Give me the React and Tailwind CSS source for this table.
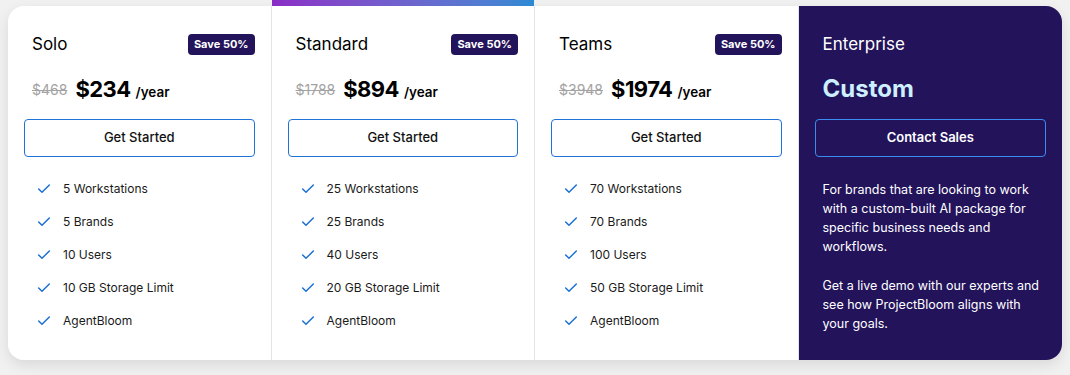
import React from 'react';
import { Check } from 'lucide-react';

const plans = [
  {
    name: 'Solo',
    oldPrice: '$468',
    price: '$234',
    features: ['5 Workstations', '5 Brands', '10 Users', '10 GB Storage Limit', 'AgentBloom'],
  },
  {
    name: 'Standard',
    oldPrice: '$1788',
    price: '$894',
    featured: true,
    features: ['25 Workstations', '25 Brands', '40 Users', '20 GB Storage Limit', 'AgentBloom'],
  },
  {
    name: 'Teams',
    oldPrice: '$3948',
    price: '$1974',
    features: ['70 Workstations', '70 Brands', '100 Users', '50 GB Storage Limit', 'AgentBloom'],
  },
];

const PlanColumn = ({ plan, first }) => (
  <div className={`relative bg-white px-4 pt-[28px] pb-[23px] border-r border-[#e4e4e4] ${first ? 'rounded-l-2xl' : ''}`}>
    {plan.featured && (
      <div className="absolute -top-[6px] left-0 right-0 h-[6px] bg-gradient-to-r from-[#8a2bc6] to-[#2a8ad4]" />
    )}
    <div className="flex items-center justify-between h-[21px]">
      <h3 className="ml-[8px] text-[17px] text-black leading-none">{plan.name}</h3>
      <span className="bg-[#22135a] text-white text-[11px] font-bold rounded-[4px] h-[21px] px-[6px] flex items-center">Save 50%</span>
    </div>
    <div className="ml-[8px] mt-[19px] h-[30px] flex items-center">
      <span className="text-[14px] text-[#a3a3a3] line-through mr-[8px]">{plan.oldPrice}</span>
      <span className="text-[22px] font-bold text-black tracking-tight">{plan.price}</span>
      <span className="ml-[5px] mt-[6px] text-[13.5px] font-semibold text-black">/year</span>
    </div>
    <button className="mt-[15px] w-full h-[38px] border border-[#1f73d6] rounded-[4px] text-[13px] font-medium text-[#111]">
      Get Started
    </button>
    <ul className="mt-[15px]">
      {plan.features.map((f) => (
        <li key={f} className="h-[33px] flex items-center ml-[12px]">
          <Check className="w-[16px] h-[16px] text-[#1a6fd4]" strokeWidth={2.2} />
          <span className="ml-[11px] text-[12px] text-[#1a1a1a]">{f}</span>
        </li>
      ))}
    </ul>
  </div>
);

export default function App() {
  return (
    <div className="min-h-screen w-full bg-[#f1f1f1] pt-[6px] px-[8px]" style={{ fontFamily: 'Inter, "Open Sans", sans-serif' }}>
      <div className="grid grid-cols-4 rounded-2xl shadow-[0_5px_14px_rgba(0,0,0,0.1)]">
        {plans.map((p, i) => (
          <PlanColumn key={p.name} plan={p} first={i === 0} />
        ))}
        <div className="bg-[#22135a] rounded-r-2xl px-4 pt-[28px] pb-[23px]">
          <div className="h-[21px] flex items-center">
            <h3 className="ml-[8px] text-[17px] text-white leading-none">Enterprise</h3>
          </div>
          <div className="ml-[8px] mt-[19px] h-[30px] flex items-center">
            <span className="text-[24px] font-bold text-[#cdefff]">Custom</span>
          </div>
          <button className="mt-[15px] w-full h-[38px] border border-[#3a8cf0] rounded-[4px] text-[13px] font-semibold text-white">
            Contact Sales
          </button>
          <div className="ml-[8px] mt-[23px] text-[12.5px] leading-[19px] text-white pr-[4px]">
            <p className="mb-[20px]">For brands that are looking to work with a custom-built AI package for specific business needs and workflows.</p>
            <p>Get a live demo with our experts and see how ProjectBloom aligns with your goals.</p>
          </div>
        </div>
      </div>
    </div>
  );
}
